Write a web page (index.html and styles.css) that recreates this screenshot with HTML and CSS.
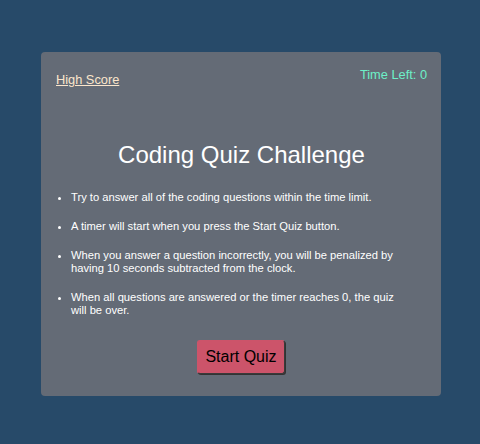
FILE: index.html
```html
<!DOCTYPE html>
<html>
<head>
<meta charset="utf-8">
<link rel="stylesheet" href="styles.css">
</head>
<body>
<main class="card">
  <header class="top">
    <a class="highscore" href="#">High Score</a>
    <span class="timer">Time Left: 0</span>
  </header>
  <h1 class="title">Coding Quiz Challenge</h1>
  <ul class="rules">
    <li>Try to answer all of the coding questions within the time limit.</li>
    <li>A timer will start when you press the Start Quiz button.</li>
    <li>When you answer a question incorrectly, you will be penalized by having 10 seconds subtracted from the clock.</li>
    <li>When all questions are answered or the timer reaches 0, the quiz will be over.</li>
  </ul>
  <div class="actions">
    <button class="start">Start Quiz</button>
  </div>
</main>
</body>
</html>
```
FILE: styles.css
```css
html, body {
  margin: 0;
  padding: 0;
}
body {
  background: #274a69;
  font-family: "Liberation Sans", Arial, sans-serif;
  padding: 52px 0 0 41px;
  height: 444px;
  box-sizing: border-box;
}
.card {
  width: 400px;
  height: 344px;
  box-sizing: border-box;
  background: #646b76;
  border-radius: 4px;
  padding: 14px 15px 0 15px;
}
.top {
  display: flex;
  justify-content: space-between;
  align-items: flex-start;
  height: 74px;
}
.highscore {
  color: #fbe6cc;
  font-size: 12.8px;
  margin-top: 6px;
  text-decoration: underline;
}
.timer {
  color: #6df0c8;
  font-size: 12.8px;
  margin-top: 1px;
  margin-right: -1px;
}
.title {
  margin: 0;
  color: #ffffff;
  font-weight: normal;
  font-size: 24px;
  text-align: center;
  line-height: 30px;
  padding-left: 1px;
}
.rules {
  margin: 21px 0 0 0;
  padding-left: 15px;
  color: #ffffff;
  font-size: 11.2px;
  line-height: 13px;
}
.rules li {
  margin-bottom: 16px;
  padding-right: 30px;
}
.actions {
  display: flex;
  justify-content: center;
  margin-top: 23px;
}
.start {
  font-family: "Liberation Sans", Arial, sans-serif;
  font-size: 16px;
  color: #000;
  background: #cc546a;
  border: 1px solid #3a3a3a;
  border-top-color: #cc546a;
  border-left-color: #cc546a;
  border-radius: 3px;
  padding: 7px 7px;
  box-shadow: 1px 1px 0 #333;
}
```
